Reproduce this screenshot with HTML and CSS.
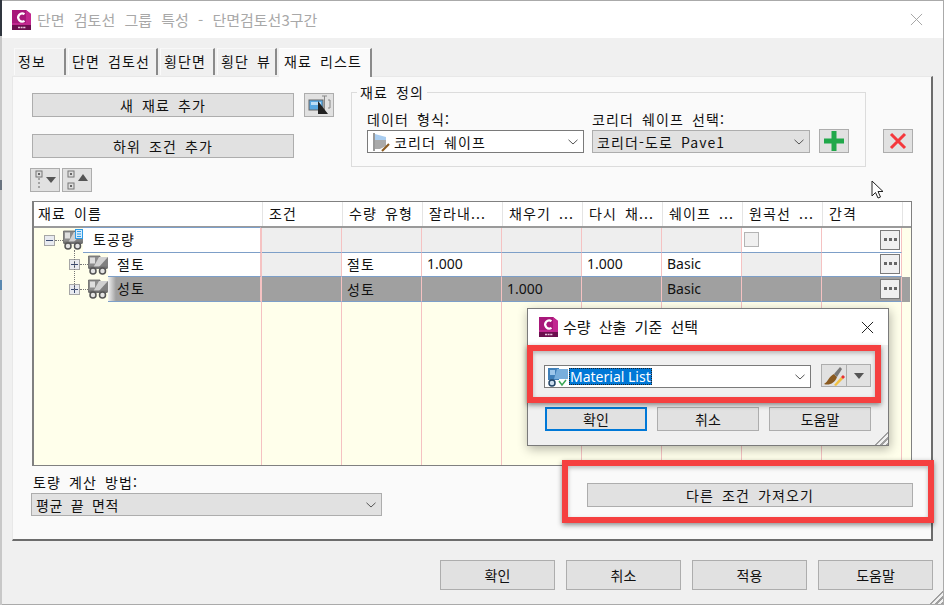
FILE: index.html
```html
<!DOCTYPE html>
<html lang="ko">
<head>
<meta charset="utf-8">
<title>단면 검토선 그룹 특성</title>
<link rel="stylesheet" href="styles.css">
</head>
<body>
<svg class="defs" width="0" height="0" aria-hidden="true">
  <symbol id="app" viewBox="0 0 20 20">
    <path d="M1 0H15L20 4V20H1Z" fill="#a8187a"/>
    <path d="M15 0L20 4V15H1V13H15Z" fill="#c2288f"/>
    <path d="M1 15H20V20H1Z" fill="#6c0f4e"/>
    <path d="M13.500 4.200A4 4 0 1 0 13.500 10.800" fill="none" stroke="#fff" stroke-width="2.200"/>
    <path d="M7 17.500H15" stroke="#e8c4dc" stroke-width="1.600" stroke-dasharray="2 .6"/>
  </symbol>
  <symbol id="truck" viewBox="0 0 20 20">
    <path d="M.5 1H12V13H.5Z" fill="#8c8c8c" stroke="#666" stroke-width=".8"/>
    <path d="M2 2.500H7V8.500H2Z" fill="#dedede"/>
    <path d="M11 2H20V13H5Z" fill="#d0d0d0"/>
    <path d="M20 2V13H10Z" fill="#808080"/>
    <path d="M.5 11.500H19.500V14H.5Z" fill="#707070"/>
    <circle cx="5" cy="16" r="3" fill="#e4e4e4" stroke="#555" stroke-width="1.500"/>
    <circle cx="14.500" cy="16" r="3" fill="#e4e4e4" stroke="#555" stroke-width="1.500"/>
  </symbol>
  <symbol id="chev" viewBox="0 0 10 6">
    <path d="M.5 .8L5 5L9.500 .8" fill="none" stroke="#555" stroke-width="1"/>
  </symbol>
  <symbol id="shape" viewBox="0 0 20 20">
    <path d="M2 1H4V19H2Z" fill="#999"/>
    <path d="M4 2L15 5V9L4 8Z" fill="#a9cdf0"/>
    <path d="M4 8H15V14L9 17H4Z" fill="#aaa"/>
    <path d="M11 19L18 12" stroke="#8a5a20" stroke-width="2.200"/>
  </symbol>
</svg>

<div class="strip"></div>

<main class="dialog">
  <header class="titlebar">
    <svg class="app-icon"><use href="#app"/></svg>
    <span class="title-text ko">단면 검토선 그룹 특성 - 단면검토선3구간</span>
    <svg class="close-x" viewBox="0 0 14 14"><path d="M1 1L13 13M13 1L1 13"/></svg>
  </header>

  <nav class="tabs ko">
    <span class="tab tab-a">정보</span>
    <span class="tab tab-b">단면 검토선</span>
    <span class="tab tab-c">횡단면</span>
    <span class="tab tab-d">횡단 뷰</span>
    <span class="tab tab-e">재료 리스트</span>
  </nav>

  <section class="page">
    <div class="top">
      <div class="left-col">
        <button class="btn wide ko">새 재료 추가</button>
        <button class="btn wide ko">하위 조건 추가</button>
        <div class="tree-tools">
          <button class="btn tool">
            <svg viewBox="0 0 28 22"><rect x="5" y="2" width="6" height="6" fill="#ddd" stroke="#777"/><rect x="7" y="4" width="2" height="2" fill="#666"/><path d="M8 9V21" stroke="#666" stroke-dasharray="2 2"/><path d="M15 8H25L20 14Z" fill="#555"/></svg>
          </button>
          <button class="btn tool">
            <svg viewBox="0 0 28 22"><rect x="5" y="2" width="6" height="6" fill="#ddd" stroke="#777"/><rect x="7" y="4" width="2" height="2" fill="#666"/><rect x="5" y="14" width="6" height="6" fill="#ddd" stroke="#777"/><rect x="7" y="16" width="2" height="2" fill="#666"/><path d="M15 12H25L20 5Z" fill="#555"/></svg>
          </button>
        </div>
      </div>
      <button class="btn pick">
        <svg viewBox="0 0 28 22"><rect x="4" y="6" width="14" height="10" fill="#5aa7e0" stroke="#666"/><rect x="6" y="8" width="10" height="3" fill="#bcdcf4"/><path d="M17 2H22M17 19H22M19.500 2V19M23 6H25V14H23" fill="none" stroke="#888"/><path d="M13 7L23 20H13Z" fill="#222"/></svg>
      </button>
      <fieldset class="group">
        <legend class="ko">재료 정의</legend>
        <div class="field">
          <label class="ko">데이터 형식:</label>
          <div class="combo white w217"><svg class="combo-ico"><use href="#shape"/></svg><span class="ko">코리더 쉐이프</span><svg class="chev"><use href="#chev"/></svg></div>
        </div>
        <div class="field">
          <label class="ko">코리더 쉐이프 선택:</label>
          <div class="combo grey w218"><span class="ko combo-text">코리더-도로 Pave1</span><svg class="chev"><use href="#chev"/></svg></div>
        </div>
        <button class="btn sq add"><svg viewBox="0 0 22 22"><path d="M8.500 1H13.500V8.500H21V13.500H13.500V21H8.500V13.500H1V8.500H8.500Z" fill="#20a84a"/></svg></button>
      </fieldset>
      <button class="btn sq del"><svg viewBox="0 0 18 18"><path d="M2 2L16 16M16 2L2 16" stroke="#f5383c" stroke-width="3"/></svg></button>
    </div>

    <div class="grid">
      <div class="head ko">
        <span class="hc first">재료 이름</span><span class="hc">조건</span><span class="hc">수량 유형</span><span class="hc">잘라내...</span><span class="hc">채우기 ...</span><span class="hc">다시 채...</span><span class="hc">쉐이프 ...</span><span class="hc">원곡선 ...</span><span class="hc">간격</span><span class="hc tail"></span>
      </div>
      <div class="body">
        <div class="row">
          <div class="c name">
            <span class="tree lvl0"><i class="exp minus"></i><i class="dots"></i><span class="truck-wrap"><svg class="truck"><use href="#truck"/></svg><svg class="calc" viewBox="0 0 8 10"><rect x=".5" y=".5" width="7" height="9" fill="#d8ecfb" stroke="#2e9be6"/><path d="M2 2.500H6M2 5H6M2 7.500H6" stroke="#2e9be6"/></svg></span></span>
            <span class="label ko pad-l0">토공량</span>
          </div>
          <div class="c off"></div><div class="c off"></div><div class="c off"></div><div class="c off"></div><div class="c off"></div><div class="c off"></div>
          <div class="c on"><i class="check"></i></div>
          <div class="c on end"><i class="more"></i></div>
        </div>
        <div class="row">
          <div class="c name">
            <span class="tree lvl1"><i class="exp plus"></i><i class="dots"></i><svg class="truck"><use href="#truck"/></svg></span>
            <span class="label ko">절토</span>
          </div>
          <div class="c off"></div><div class="c on ko">절토</div><div class="c on">1.000</div><div class="c off"></div><div class="c on">1.000</div><div class="c on">Basic</div><div class="c off"></div>
          <div class="c on end"><i class="more"></i></div>
        </div>
        <div class="row sel">
          <div class="c name">
            <span class="tree lvl1"><i class="exp plus"></i><i class="dots"></i><svg class="truck"><use href="#truck"/></svg></span>
            <span class="label ko">성토</span>
          </div>
          <div class="c"></div><div class="c ko">성토</div><div class="c"></div><div class="c">1.000</div><div class="c"></div><div class="c">Basic</div><div class="c"></div>
          <div class="c end"><i class="more"></i></div>
          <div class="sel-tail"></div>
        </div>
        <div class="filler">
          <i class="col first"></i><i class="col"></i><i class="col"></i><i class="col"></i><i class="col"></i><i class="col"></i><i class="col"></i><i class="col"></i><i class="col"></i>
        </div>
        <i class="vdots"></i>
      </div>
    </div>

    <div class="bottom">
      <div class="calc-method">
        <label class="ko">토량 계산 방법:</label>
        <div class="combo grey w351"><span class="ko combo-text tight">평균 끝 면적</span><svg class="chev"><use href="#chev"/></svg></div>
      </div>
      <button class="btn import ko">다른 조건 가져오기</button>
    </div>
  </section>

  <footer class="actions ko">
    <button class="btn act">확인</button>
    <button class="btn act">취소</button>
    <button class="btn act">적용</button>
    <button class="btn act">도움말</button>
  </footer>
  <i class="grip main-grip"></i>
</main>

<aside class="sub">
  <header class="sub-title">
    <svg class="app-icon sub-icon"><use href="#app"/></svg>
    <span class="sub-text ko">수량 산출 기준 선택</span>
    <svg class="close-x dark" viewBox="0 0 14 14"><path d="M1 1L13 13M13 1L1 13"/></svg>
  </header>
  <div class="sub-body">
    <div class="sub-row">
      <div class="combo white w267">
        <svg class="combo-ico mat" viewBox="0 0 20 20"><path d="M0 1H11V13H0Z" fill="#3f7fb8"/><path d="M2 3H7V8H2Z" fill="#9cc6ea"/><path d="M9 2H20V12H6Z" fill="#78aedc"/><circle cx="4" cy="16" r="3" fill="#cde" stroke="#246" stroke-width="1.500"/><path d="M11 14L14 18L18 13" fill="none" stroke="#3aa655" stroke-width="1.500"/></svg>
        <span class="selected">Material List</span>
        <svg class="chev"><use href="#chev"/></svg>
      </div>
      <div class="split">
        <button class="split-a"><svg viewBox="0 0 22 20"><path d="M1 18C5 16 6 10 11 8L14 11C12 17 6 20 1 18Z" fill="#8a5a20"/><path d="M11 8L17 1L19 3L14 11Z" fill="#777"/><path d="M11 19L18 11L20 13L13 20Z" fill="#f2c040"/><path d="M18 11L20 9L22 11L20 13Z" fill="#e83030"/></svg></button>
        <button class="split-b"><i class="tri"></i></button>
      </div>
    </div>
    <div class="sub-actions ko">
      <button class="btn sub-btn focus">확인</button>
      <button class="btn sub-btn">취소</button>
      <button class="btn sub-btn">도움말</button>
    </div>
  </div>
  <i class="grip sub-grip"></i>
  <div class="callout callout-a"></div>
</aside>

<div class="callout callout-b"></div>

<svg class="cursor" viewBox="0 0 13 19"><path d="M1 1V16L4.500 12.500L7 18L9.500 17L7 11.500H12Z" fill="#fff" stroke="#222" stroke-width="1"/></svg>
</body>
</html>
```

FILE: styles.css
```css
* { box-sizing: border-box; }
html, body { margin: 0; height: 100%; }
body {
  width: 944px; height: 605px; overflow: hidden; display: flex; position: relative;
  background: #f0f0f0; color: #111;
  font: 14px/18px "Noto Sans", "Noto Sans CJK KR", sans-serif;
}
.ko { font-family: "Noto Sans CJK KR", "Noto Sans", sans-serif; letter-spacing: 1.1px; word-spacing: 3px; font-weight: 400; }
.defs { position: absolute; }
i { display: block; font-style: normal; }
button { font: inherit; color: inherit; padding: 0; }
svg { display: block; }

.strip { width: 2px; flex: none; background: linear-gradient(#30363f 0 36px, #c8c8c8 36px 180px, #6a7480 180px 190px, #c8c8c8 190px 280px, #5a88b0 280px 290px, #c8c8c8 290px); }

.dialog { flex: 1; display: flex; flex-direction: column; border-top: 1px solid #aaa; border-right: 1px solid #aaa; border-bottom: 1px solid #aaa; position: relative; min-width: 0; }
.titlebar { height: 37px; flex: none; background: #fff; display: flex; align-items: center; padding: 0 20px 0 9px; }
.app-icon { width: 20px; height: 20px; flex: none; }
.title-text { margin-left: 6px; font-size: 15px; color: #a8a8a8; flex: 1; letter-spacing: 0; word-spacing: 5px; }
.close-x { width: 13px; height: 13px; flex: none; }
.close-x path { fill: none; stroke: #a0a0a0; stroke-width: 1; }
.close-x.dark path { stroke: #111; }

.tabs { display: flex; height: 38px; flex: none; padding: 10px 0 0 12px; font-size: 14px; }
.tab { height: 27px; background: #f0f0f0; border-top: 1px solid #f8f8f8; border-left: 1px solid #fafafa; border-right: 2px solid #8a8a8a; padding: 3px 0 0 3px; white-space: nowrap; margin-right: 2px; }
.tab-a { width: 52px; }
.tab-b { width: 90px; }
.tab-c { width: 55px; }
.tab-d { width: 60px; }
.tab-e { width: 93px; margin: 0; height: 29px; background: #fafafa; border-top-color: #fff; padding-left: 4px; position: relative; z-index: 1; }

.page { flex: 1; margin: 0 10px 0 10px; background: #fafafa; border: 1px solid #e8e8e8; border-right: 2px solid #6c6c6c; border-bottom: 2px solid #6c6c6c; padding: 16px 20px 0 19px; display: flex; flex-direction: column; min-height: 0; }

.btn { background: #e1e1e1; border: 1px solid #adadad; display: block; }
.top { display: flex; align-items: flex-start; height: 108px; flex: none; }
.left-col { width: 262px; flex: none; display: flex; flex-direction: column; }
.wide { height: 24px; margin-bottom: 17px; text-align: center; }
.tree-tools { display: flex; gap: 2px; margin: -7px 0 0 -2px; }
.tool { width: 30px; height: 24px; }
.tool svg { width: 28px; height: 22px; }
.pick { width: 30px; height: 24px; margin-left: 10px; flex: none; }
.pick svg { width: 28px; height: 22px; }

.group { width: 515px; height: 83px; margin: -9px 0 0 17px; flex: none; border: 1px solid #dcdcdc; padding: 0 0 0 15px; display: flex; gap: 8px; align-items: flex-start; position: relative; min-inline-size: 0; }
.group legend { padding: 0 3px; margin-left: -10px; line-height: 16px; }
.field label { display: block; height: 20px; line-height: 18px; margin-top: 10px; }
.combo { height: 23px; display: flex; align-items: center; position: relative; padding-left: 3px; }
.combo.white { background: #fff; border: 1px solid #7a7a7a; }
.combo.grey { background: #e1e1e1; border: 1px solid #adadad; }
.w217 { width: 217px; }
.w218 { width: 218px; }
.w267 { width: 267px; }
.w351 { width: 351px; }
.combo-ico { width: 20px; height: 20px; flex: none; margin-right: 3px; }
.combo-text { padding-left: 1px; }
.tight { letter-spacing: .7px; }
.chev { width: 10px; height: 6px; position: absolute; right: 5px; top: 8px; }
.add { position: absolute; left: 467px; top: 29px; }
.sq { width: 30px; height: 24px; flex: none; }
.add svg { width: 22px; height: 22px; margin: 0 auto; }
.del { margin: 36px 0 0 17px; }
.del svg { width: 18px; height: 18px; margin: 2px auto; }

.grid { height: 265px; flex: none; width: 880px; margin-left: 0; border: 1px solid #808080; border-left-width: 2px; display: flex; flex-direction: column; background: #fff; }
.head { height: 26px; flex: none; display: flex; border-bottom: 2px solid #9a9a9a; line-height: 22px; }
.hc { width: 80px; flex: none; border-right: 1px solid #e4e4e4; padding-left: 6px; white-space: nowrap; overflow: hidden; }
.hc.first { width: 229px; padding-left: 4px; }
.hc.tail { width: 8px; border: 0; padding: 0; }
.body { flex: 1; background: #ffffeb; display: flex; flex-direction: column; position: relative; min-height: 0; }
.row { display: flex; height: 24.500px; flex: none; position: relative; }
.row .c { width: 80px; flex: none; border-right: 1px solid #f5c2c2; border-bottom: 1px solid #7d9fc8; padding-left: 5px; line-height: 22px; display: flex; align-items: center; }
.row .c.off { background: #eee; }
.row .c.on { background: #fff; }
.row .c.end { justify-content: flex-end; padding: 0 1px 0 0; }
.row .c.name { width: 228px; padding: 0; border-bottom: 0; background: transparent; align-items: stretch; }
.tree { display: flex; align-items: center; flex: none; position: relative; }
.lvl0 { width: 49px; padding-left: 10px; }
.lvl1 { width: 74px; padding-left: 35px; }
.exp { width: 11px; height: 11px; border: 1px solid #a6a6a6; background: #e8eaf0; flex: none; position: relative; }
.exp::before { content: ""; position: absolute; left: 1px; right: 1px; top: 4px; height: 1px; background: #3a4a70; }
.plus::after { content: ""; position: absolute; top: 1px; bottom: 1px; left: 4px; width: 1px; background: #3a4a70; }
.dots { width: 8px; border-top: 1px dotted #777; flex: none; }
.truck-wrap { position: relative; }
.truck { width: 20px; height: 20px; flex: none; }
.calc { position: absolute; width: 8px; height: 10px; left: 12px; top: -1px; }
.label { flex: 1; background: #fff; border-bottom: 1px solid #7d9fc8; border-right: 1px solid #f5c2c2; padding-left: 9px; line-height: 22px; }
.pad-l0 { padding-left: 10px; }
.row:first-child .label { border-top: 1px solid #7d9fc8; margin-top: -1px; }
.sel .label { background: linear-gradient(90deg, #f2f2f2, #a0a0a0 8px); }
.sel .c { background: #a0a0a0; }
.row .c.name { background: transparent; }
.sel-tail { position: absolute; left: 868px; width: 8px; top: 0; bottom: 0; background: #a0a0a0; }
.check { width: 15px; height: 15px; border: 1px solid #b4b4b4; background: #f0f0f0; margin-left: -3px; }
.more { width: 20px; height: 20px; border: 1px solid #7a7a7a; background: #f0f0f0; position: relative; }
.more::before { content: ""; position: absolute; left: 3px; top: 7px; width: 3px; height: 3px; background: #666; box-shadow: 5px 0 #666, 10px 0 #666; }
.filler { flex: 1; display: flex; min-height: 0; }
.col { width: 80px; flex: none; border-right: 1px solid #f5c2c2; }
.col.first { width: 228px; }
.vdots { position: absolute; left: 40px; top: 22px; height: 40px; border-left: 1px dotted #777; }

.bottom { display: flex; justify-content: space-between; align-items: flex-start; flex: 1; }
.calc-method { margin: 7px 0 0 -1px; }
.calc-method label { display: block; height: 20px; line-height: 18px; padding-left: 2px; }
.import { width: 326px; height: 24px; margin: 17px -2px 0 0; text-align: center; }

.actions { height: 63px; flex: none; display: flex; justify-content: flex-end; gap: 11px; padding: 19px 10px 0 0; }
.act { width: 115px; height: 30px; }
.grip { position: absolute; background: repeating-linear-gradient(135deg, transparent 0 2px, #a0a0a0 2px 4px); clip-path: polygon(100% 0, 100% 100%, 0 100%); }
.main-grip { right: 0; bottom: 0; width: 14px; height: 14px; }

.sub { position: absolute; left: 527px; top: 308px; width: 362px; height: 138px; background: #f0f0f0; border: 1px solid #7a7a7a; box-shadow: 1px 3px 10px rgba(0, 0, 0, .3); z-index: 3; display: flex; flex-direction: column; }
.sub-title { height: 36px; flex: none; background: #fff; display: flex; align-items: center; padding: 0 14px 0 10px; }
.sub-text { flex: 1; margin-left: 5px; font-size: 15px; letter-spacing: 0; word-spacing: 4px; color: #111; }
.sub-body { flex: 1; padding: 20px 17px 0 16px; }
.sub-row { display: flex; justify-content: space-between; height: 23px; }
.combo-ico.mat { margin-right: 1px; }
.selected { background: #0078d7; color: #fff; outline: 1px dotted #222; outline-offset: -1px; padding: 0 1px; line-height: 17px; height: 17px; font-size: 14px; }
.split { display: flex; width: 50px; height: 23px; margin-top: -1px; border: 1px solid #adadad; background: #e1e1e1; }
.split-a { width: 25px; border: 0; border-right: 1px solid #adadad; background: transparent; }
.split-a svg { width: 22px; height: 20px; margin: 0 auto; }
.split-b { flex: 1; border: 0; background: transparent; }
.tri { width: 0; height: 0; border: 5px solid transparent; border-top: 6px solid #555; border-bottom: 0; margin: 0 auto; }
.sub-actions { display: flex; gap: 10px; margin: 19px 0 0 1px; }
.sub-btn { width: 102px; height: 24px; }
.focus { border: 2px solid #0078d7; }
.sub-grip { right: 0; bottom: 0; width: 14px; height: 14px; }

.callout { position: absolute; border: 6px solid #f54040; box-shadow: 0 2px 5px rgba(0, 0, 0, .45), inset 0 2px 4px rgba(0, 0, 0, .25); pointer-events: none; }
.callout-a { left: -1px; top: 36px; width: 354px; height: 58px; }
.callout-b { left: 562px; top: 460px; width: 372px; height: 63px; z-index: 4; }
.cursor { position: absolute; left: 871px; top: 180px; width: 13px; height: 19px; z-index: 5; }
```
